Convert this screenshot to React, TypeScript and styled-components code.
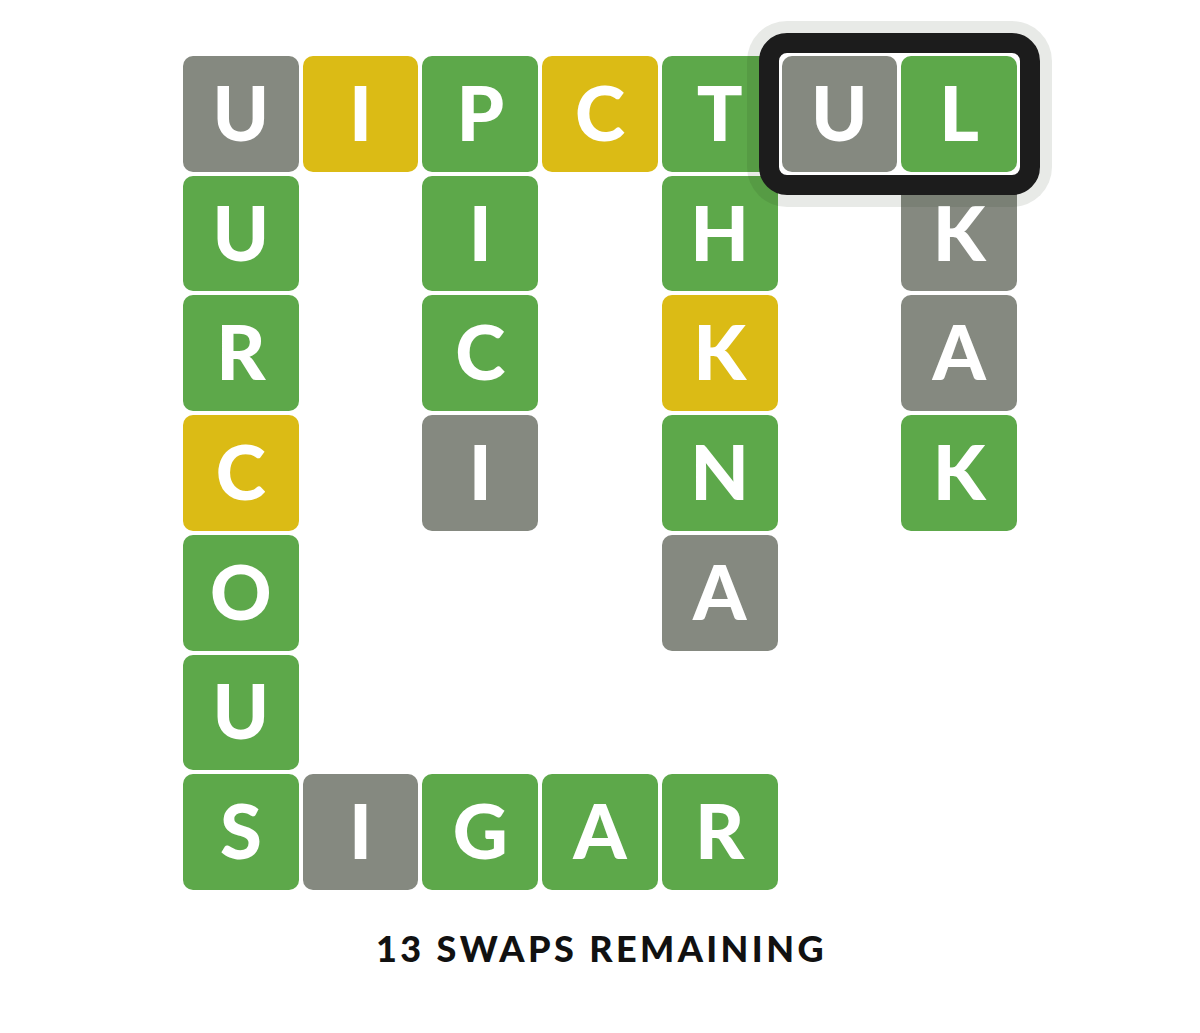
import React from "react";
import styled, { createGlobalStyle } from "styled-components";

const GlobalStyle = createGlobalStyle`
  html, body {
    margin: 0;
    padding: 0;
    background: #ffffff;
  }
  body {
    font-family: "Lato", "Noto Sans", sans-serif;
  }
`;

type Tone = "green" | "yellow" | "gray";

const toneColor: Record<Tone, string> = {
  green: "#5da84a",
  yellow: "#dbbb15",
  gray: "#858980",
};

type Cell = { ch: string; tone: Tone } | null;

const g = (ch: string): Cell => ({ ch, tone: "green" });
const y = (ch: string): Cell => ({ ch, tone: "yellow" });
const s = (ch: string): Cell => ({ ch, tone: "gray" });
const _ = null;

const board: Cell[][] = [
  [s("U"), y("I"), g("P"), y("C"), g("T"), s("U"), g("L")],
  [g("U"), _, g("I"), _, g("H"), _, s("K")],
  [g("R"), _, g("C"), _, y("K"), _, s("A")],
  [y("C"), _, s("I"), _, g("N"), _, g("K")],
  [g("O"), _, _, _, s("A"), _, _],
  [g("U"), _, _, _, _, _, _],
  [g("S"), s("I"), g("G"), g("A"), g("R"), _, _],
];

const Page = styled.main`
  display: flex;
  flex-direction: column;
  align-items: center;
  padding-top: 56px;
`;

const Board = styled.div`
  position: relative;
  display: grid;
  grid-template-columns: repeat(7, 1fr);
  grid-template-rows: repeat(7, 1fr);
  gap: 4px;
  width: 834px;
  height: 834px;
`;

const Tile = styled.div<{ $tone: Tone; $row: number; $col: number }>`
  grid-row: ${(p) => p.$row + 1};
  grid-column: ${(p) => p.$col + 1};
  display: flex;
  align-items: center;
  justify-content: center;
  border-radius: 10px;
  background: ${(p) => toneColor[p.$tone]};
  color: #ffffff;
  font-family: "Lato", "Noto Sans", sans-serif;
  font-weight: 900;
  font-size: 76px;
  line-height: 1;
  padding-bottom: 4px;
  box-sizing: border-box;
  user-select: none;
`;

/* Highlight ring around the two tiles picked for a swap */
const Selection = styled.div<{ $row: number; $col: number; $span: number }>`
  grid-row: ${(p) => p.$row + 1};
  grid-column: ${(p) => p.$col + 1} / span ${(p) => p.$span};
  position: relative;
  pointer-events: none;
  z-index: 2;

  &::after {
    content: "";
    position: absolute;
    inset: -23px;
    border: 20px solid #1c1c1c;
    border-radius: 28px;
    box-shadow: 0 0 0 12px rgba(30, 45, 20, 0.1);
  }
`;

const Status = styled.p`
  margin: 37px 0 0;
  padding-left: 3px;
  font-family: "Lato", "Noto Sans", sans-serif;
  font-weight: 900;
  font-size: 36px;
  line-height: 42px;
  color: #111111;
  letter-spacing: 3.4px;
`;

export default function App() {
  return (
    <>
      <GlobalStyle />
      <Page>
        <Board>
          {board.map((row, r) =>
            row.map((cell, c) =>
              cell ? (
                <Tile key={`${r}-${c}`} $tone={cell.tone} $row={r} $col={c}>
                  {cell.ch}
                </Tile>
              ) : null
            )
          )}
          <Selection $row={0} $col={5} $span={2} />
        </Board>
        <Status>13 SWAPS REMAINING</Status>
      </Page>
    </>
  );
}
